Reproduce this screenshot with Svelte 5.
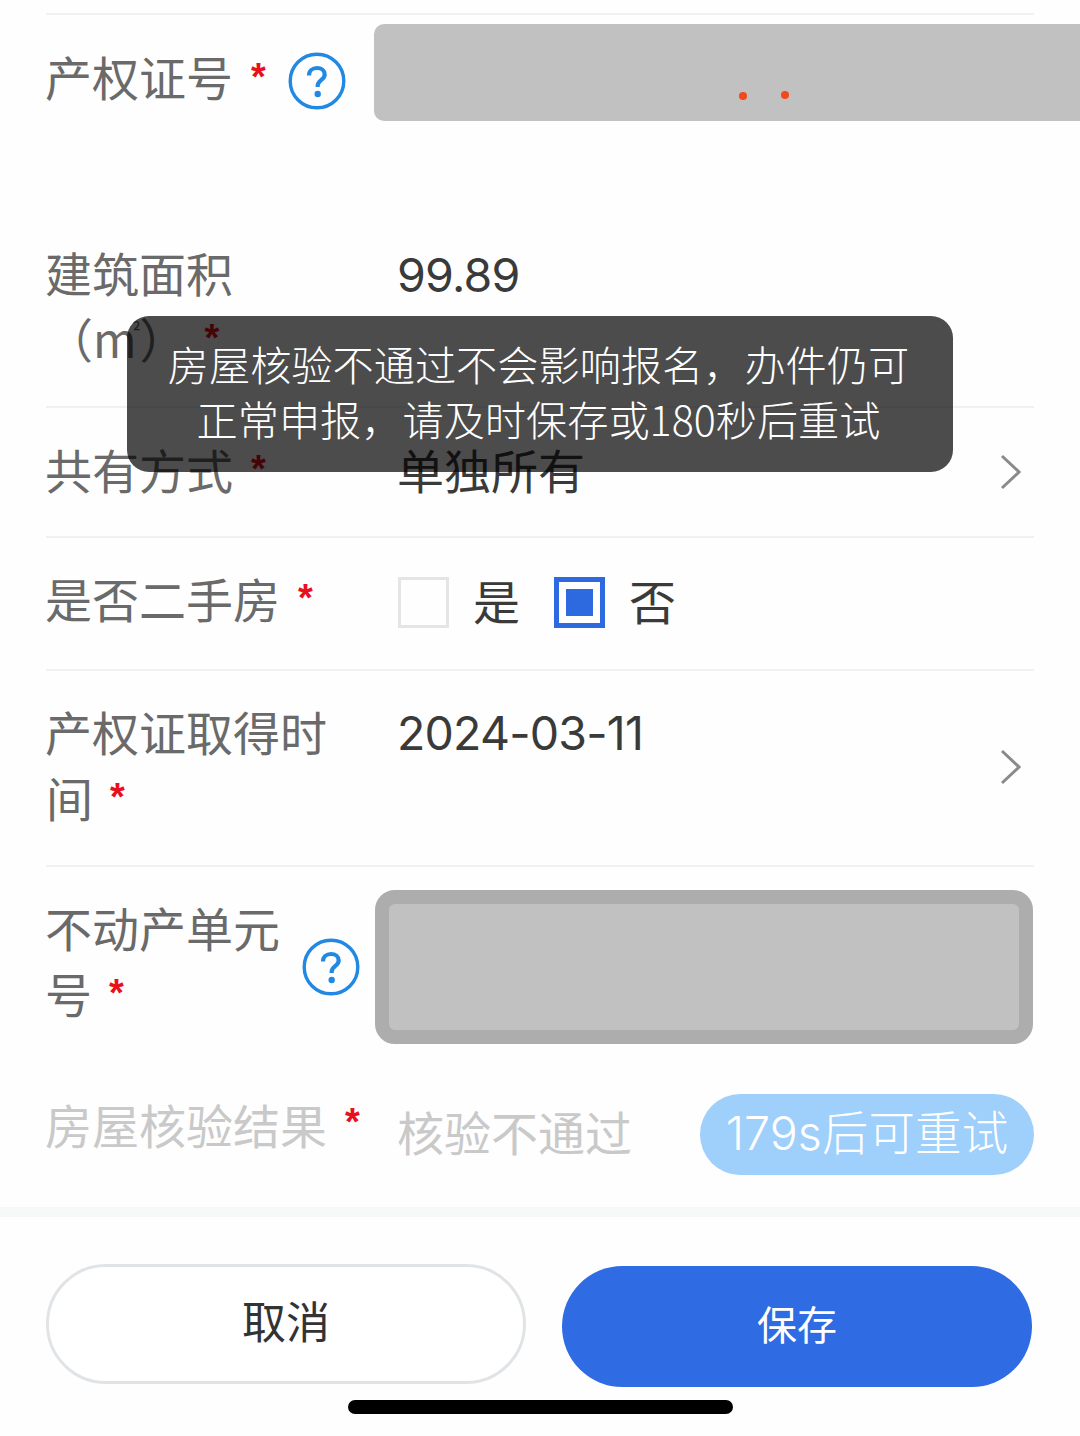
<script>
  const lineColor = '#f0f1f3';
</script>

<div class="page" style="--line:{lineColor}">
  <div class="form">
    <div class="row row-cert">
      <div class="head">
        <div class="label">产权证号<span class="star">*</span></div>
        <svg class="help" viewBox="0 0 58 58" aria-hidden="true">
          <circle cx="29" cy="29" r="26.8" fill="none" stroke="#2189e3" stroke-width="3.4" />
          <path d="M21 23.500c0-4.600 3.400-7.500 8-7.500 4.500 0 7.700 2.700 7.700 6.500 0 5.500-7 5.700-7 10.900v1.600" fill="none" stroke="#2189e3" stroke-width="4.200" />
          <circle cx="29.700" cy="42" r="3.200" fill="#2189e3" />
        </svg>
      </div>
      <div class="mask mask-flat">
        <span class="dot dot-a"></span>
        <span class="dot dot-b"></span>
      </div>
    </div>

    <div class="row row-area line">
      <div class="label col">建筑面积<br />（m<span class="sq">²</span>）<span class="star">*</span></div>
      <div class="value num">99.89</div>
    </div>

    <div class="row row-own line">
      <div class="label col">共有方式<span class="star">*</span></div>
      <div class="value grow">单独所有</div>
      <svg class="chev" viewBox="0 0 24 36" aria-hidden="true"><path d="M3 2l17 16L3 34" fill="none" stroke="#8a8a8a" stroke-width="3" /></svg>
    </div>

    <div class="row row-second line">
      <div class="label col">是否二手房<span class="star">*</span></div>
      <div class="choices">
        <span class="box"></span>
        <span class="value opt">是</span>
        <span class="box on"><i></i></span>
        <span class="value opt">否</span>
      </div>
    </div>

    <div class="row row-date line">
      <div class="label col">产权证取得时<br />间<span class="star star-short">*</span></div>
      <div class="value num grow">2024-03-11</div>
      <svg class="chev chev-date" viewBox="0 0 24 36" aria-hidden="true"><path d="M3 2l17 16L3 34" fill="none" stroke="#8a8a8a" stroke-width="3" /></svg>
    </div>

    <div class="row row-unit line">
      <div class="head head-unit">
        <div class="label">不动产单元<br />号<span class="star star-short">*</span></div>
        <svg class="help" viewBox="0 0 58 58" aria-hidden="true">
          <circle cx="29" cy="29" r="26.8" fill="none" stroke="#2189e3" stroke-width="3.4" />
          <path d="M21 23.500c0-4.600 3.400-7.500 8-7.500 4.500 0 7.700 2.700 7.700 6.500 0 5.500-7 5.700-7 10.900v1.600" fill="none" stroke="#2189e3" stroke-width="4.200" />
          <circle cx="29.700" cy="42" r="3.200" fill="#2189e3" />
        </svg>
      </div>
      <div class="mask mask-framed"></div>
    </div>

    <div class="row row-check">
      <div class="label col off">房屋核验结果<span class="star">*</span></div>
      <div class="value off grow">核验不通过</div>
      <div class="pill">179s后可重试</div>
    </div>
  </div>

  <div class="band"></div>

  <div class="footer">
    <button class="btn cancel">取消</button>
    <button class="btn save">保存</button>
  </div>
  <div class="home"></div>

  <div class="toast">房屋核验不通过不会影响报名，办件仍可<br />正常申报，请及时保存或180秒后重试</div>
</div>

<style>
  :global(body) {
    margin: 0;
    background: #fff;
  }
  .page {
    position: relative;
    width: 1080px;
    height: 1436px;
    overflow: hidden;
    background: #fefefe;
    font-family: "Inter", "Noto Sans CJK SC", sans-serif;
    font-weight: 400;
  }
  .form {
    margin: 0 46px;
    padding-top: 13px;
  }
  .row {
    display: flex;
    align-items: flex-start;
    box-sizing: border-box;
  }
  .line {
    border-bottom: 2px solid var(--line);
  }
  .label {
    font-size: 47px;
    line-height: 66px;
    color: #6a6a6a;
    white-space: nowrap;
    font-family: "Noto Sans CJK SC", sans-serif;
    margin-left: -1px;
  }
  .col {
    width: 352px;
    flex: none;
    margin-left: 0;
    text-indent: -1px;
  }
  .star {
    display: inline-block;
    margin-left: 18px;
    color: #e8101c;
    font-family: "Liberation Sans", sans-serif;
    font-weight: 700;
    font-size: 38px;
    line-height: 1;
    position: relative;
    top: -7px;
    text-indent: 0;
  }
  .star-short {
    margin-left: 17px;
  }
  .sq {
    display: inline-block;
    font-size: 20px;
    line-height: 1;
    width: 6px;
    margin-left: -3px;
    position: relative;
    top: -19px;
  }
  .value {
    font-size: 47px;
    line-height: 66px;
    color: #3a3a3a;
    font-family: "Noto Sans CJK SC", sans-serif;
    text-indent: -1px;
  }
  .num {
    font-family: "Inter", sans-serif;
    font-size: 46.5px;
    font-weight: 400;
    letter-spacing: -0.8px;
    margin-top: 2px;
    text-indent: -1px;
  }
  .grow {
    flex: 1;
  }
  .off {
    color: #c9c9c9;
  }
  .head {
    width: 300px;
    flex: none;
    display: flex;
    align-items: center;
    justify-content: space-between;
  }
  .help {
    width: 58px;
    height: 58px;
    flex: none;
  }
  .mask {
    box-sizing: border-box;
    background: #c1c1c1;
    position: relative;
  }
  .row-cert {
    height: 194px;
    border-top: 2px solid var(--line);
    padding-top: 9px;
  }
  .row-cert .head {
    height: 97px;
    margin-top: 8px;
  }
  .row-cert .label {
    margin-bottom: 9px;
  }
  .row-cert .star {
    top: -6px;
  }
  .mask-flat {
    flex: 1;
    height: 97px;
    margin-left: 28px;
    margin-right: -46px;
    border-radius: 10px 0 0 10px;
  }
  .dot {
    position: absolute;
    width: 8px;
    height: 8px;
    border-radius: 50%;
    background: #f2481c;
  }
  .dot-a {
    left: 365px;
    top: 68px;
  }
  .dot-b {
    left: 407px;
    top: 67px;
  }
  .row-area {
    height: 201px;
    padding-top: 32px;
  }
  .row-area .num {
    margin-top: 3px;
  }
  .row-own {
    height: 130px;
    padding-top: 28px;
  }
  .row-second {
    height: 133px;
    padding-top: 27px;
  }
  .choices {
    display: flex;
    align-items: center;
    height: 66px;
    margin-top: 4px;
  }
  .box {
    box-sizing: border-box;
    width: 51px;
    height: 51px;
    border: 3px solid #e3e5e7;
    display: flex;
    align-items: center;
    justify-content: center;
    flex: none;
  }
  .box.on {
    border: 5px solid #2d6ae0;
    margin-left: 34px;
  }
  .box i {
    display: block;
    width: 27px;
    height: 27px;
    background: #2d6ae0;
  }
  .opt {
    margin: 0 0 4px 24px;
    text-indent: 0;
  }
  .row-date {
    height: 196px;
    padding-top: 27px;
  }
  .chev {
    width: 24px;
    height: 36px;
    flex: none;
    margin: 18px 11px 0 0;
  }
  .chev-date {
    margin-top: 51px;
  }
  .row-unit {
    height: 210px;
    border-bottom: 0;
    padding-top: 23px;
  }
  .head-unit {
    height: 154px;
    width: 329px;
    padding-right: 15px;
    box-sizing: border-box;
  }
  .head-unit .label {
    margin-bottom: 14px;
  }
  .mask-framed {
    flex: 1;
    height: 154px;
    margin-right: 1px;
    border: 14px solid #adadad;
    border-radius: 20px;
  }
  .row-check {
    height: 130px;
    padding-top: 14px;
  }
  .row-check .star {
    top: -9px;
  }
  .row-check .value {
    padding-top: 7px;
  }
  .pill {
    box-sizing: border-box;
    width: 334px;
    height: 81px;
    margin-top: 3px;
    border-radius: 41px;
    background: #9fcffb;
    color: #fff;
    font-size: 46.5px;
    line-height: 79px;
    text-align: center;
    white-space: nowrap;
    font-family: "Inter", "Noto Sans CJK SC", sans-serif;
    font-weight: 300;
    letter-spacing: 0.1px;
  }
  .band {
    height: 10px;
    background: #f7f8f8;
  }
  .footer {
    display: flex;
    align-items: flex-start;
    justify-content: space-between;
    margin: 47px 48px 0 46px;
  }
  .btn {
    border-radius: 61px;
    padding: 0 0 8px;
    font-family: "Noto Sans CJK SC", sans-serif;
    box-sizing: border-box;
  }
  .cancel {
    width: 480px;
    height: 120px;
    background: #fff;
    border: 3px solid #e1e4e6;
    color: #333;
    font-size: 44px;
    font-weight: 400;
  }
  .save {
    width: 470px;
    height: 121px;
    margin-top: 2px;
    border: 0;
    background: #2f6be2;
    color: #fff;
    font-size: 40px;
    font-weight: 400;
  }
  .home {
    width: 385px;
    height: 14px;
    margin: 13px auto 0;
    border-radius: 7px;
    background: #000;
  }
  .toast {
    position: absolute;
    left: 127px;
    top: 316px;
    width: 826px;
    height: 156px;
    box-sizing: border-box;
    padding: 20px 3px 0 0;
    border-radius: 22px;
    background: rgba(0, 0, 0, 0.7);
    color: #fff;
    font-size: 41.2px;
    line-height: 55px;
    text-align: center;
    white-space: nowrap;
    font-family: "Noto Sans CJK SC", sans-serif;
    font-weight: 300;
  }
</style>
